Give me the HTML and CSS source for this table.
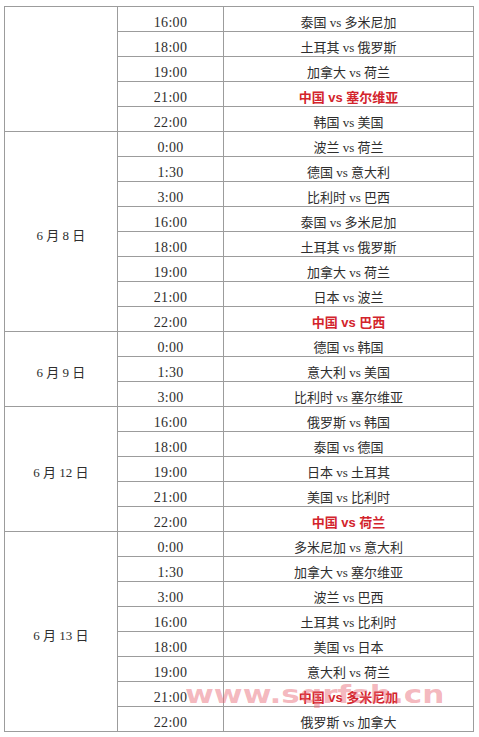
FILE: index.html
```html
<!DOCTYPE html>
<html lang="zh">
<head>
<meta charset="utf-8">
<link rel="stylesheet" href="styles.css">
</head>
<body>
<div class="page">
<table class="schedule">
<colgroup><col class="c-date"><col class="c-time"><col class="c-match"></colgroup>
<tbody>
<tr><td class="date" rowspan="5"></td><td class="time">16:00</td><td>泰国 vs 多米尼加</td></tr>
<tr><td class="time">18:00</td><td>土耳其 vs 俄罗斯</td></tr>
<tr><td class="time">19:00</td><td>加拿大 vs 荷兰</td></tr>
<tr><td class="time">21:00</td><td class="cn">中国 vs 塞尔维亚</td></tr>
<tr><td class="time">22:00</td><td>韩国 vs 美国</td></tr>

<tr><td class="date" rowspan="8">6 月 8 日</td><td class="time">0:00</td><td>波兰 vs 荷兰</td></tr>
<tr><td class="time">1:30</td><td>德国 vs 意大利</td></tr>
<tr><td class="time">3:00</td><td>比利时 vs 巴西</td></tr>
<tr><td class="time">16:00</td><td>泰国 vs 多米尼加</td></tr>
<tr><td class="time">18:00</td><td>土耳其 vs 俄罗斯</td></tr>
<tr><td class="time">19:00</td><td>加拿大 vs 荷兰</td></tr>
<tr><td class="time">21:00</td><td>日本 vs 波兰</td></tr>
<tr><td class="time">22:00</td><td class="cn">中国 vs 巴西</td></tr>

<tr><td class="date" rowspan="3">6 月 9 日</td><td class="time">0:00</td><td>德国 vs 韩国</td></tr>
<tr><td class="time">1:30</td><td>意大利 vs 美国</td></tr>
<tr><td class="time">3:00</td><td>比利时 vs 塞尔维亚</td></tr>

<tr><td class="date" rowspan="5">6 月 12 日</td><td class="time">16:00</td><td>俄罗斯 vs 韩国</td></tr>
<tr><td class="time">18:00</td><td>泰国 vs 德国</td></tr>
<tr><td class="time">19:00</td><td>日本 vs 土耳其</td></tr>
<tr><td class="time">21:00</td><td>美国 vs 比利时</td></tr>
<tr><td class="time">22:00</td><td class="cn">中国 vs 荷兰</td></tr>

<tr><td class="date" rowspan="8">6 月 13 日</td><td class="time">0:00</td><td>多米尼加 vs 意大利</td></tr>
<tr><td class="time">1:30</td><td>加拿大 vs 塞尔维亚</td></tr>
<tr><td class="time">3:00</td><td>波兰 vs 巴西</td></tr>
<tr><td class="time">16:00</td><td>土耳其 vs 比利时</td></tr>
<tr><td class="time">18:00</td><td>美国 vs 日本</td></tr>
<tr><td class="time">19:00</td><td>意大利 vs 荷兰</td></tr>
<tr><td class="time">21:00</td><td class="cn">中国 vs 多米尼加</td></tr>
<tr><td class="time">22:00</td><td>俄罗斯 vs 加拿大</td></tr>
</tbody>
</table>
<div class="watermark">www.sqrfsh.cn</div>
</div>
</body>
</html>
```

FILE: styles.css
```css
html, body {
  margin: 0;
  padding: 0;
  background: #fff;
}
.page {
  position: relative;
  padding: 6px 0 0 4px;
}
.schedule {
  border-collapse: separate;
  border-spacing: 0;
  table-layout: fixed;
  width: 470px;
  border-left: 1px solid #9c9c9c;
  border-top: 1px solid #9c9c9c;
  font-family: "Liberation Serif", "Noto Sans CJK SC", serif;
  font-size: 13px;
  color: #2e2e2e;
}
.c-date { width: 113px; }
.c-time { width: 106px; }
.c-match { width: 250px; }
.schedule td {
  box-sizing: border-box;
  border-right: 1px solid #9c9c9c;
  border-bottom: 1px solid #9c9c9c;
  height: 25px;
  padding: 8px 0 0 0;
  line-height: 16px;
  text-align: center;
  vertical-align: middle;
  white-space: nowrap;
}
.schedule td.time {
  font-size: 14px;
  letter-spacing: 0.3px;
}
.schedule td.cn {
  color: #d3242c;
  font-weight: bold;
  font-family: "Liberation Sans", "Noto Sans CJK SC", sans-serif;
}
.watermark {
  position: absolute;
  left: 185px;
  top: 680px;
  font-family: "DejaVu Sans", sans-serif;
  font-weight: bold;
  font-size: 24px;
  line-height: 30px;
  color: rgba(232, 96, 110, 0.45);
  transform: scaleX(1.3);
  transform-origin: left top;
  white-space: nowrap;
  pointer-events: none;
}
```
